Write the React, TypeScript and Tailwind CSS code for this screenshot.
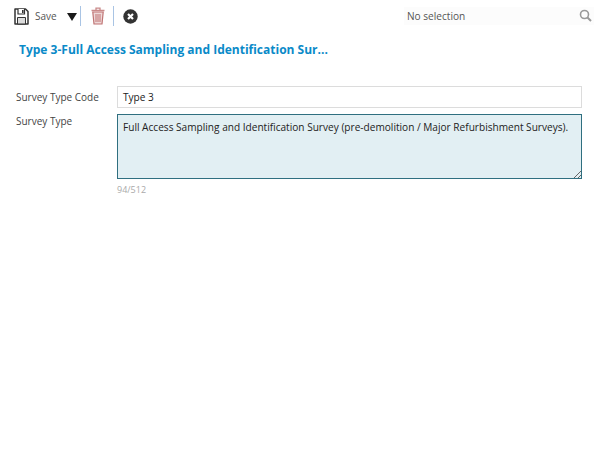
import React from "react";

export default function App() {
  return (
    <div className="w-[600px] h-[454px] bg-white overflow-hidden font-['Open_Sans',sans-serif] text-[10px] text-[#333]">
      <div className="flex items-center h-[32px] pl-[14px]">
        <svg width="15" height="17" viewBox="0 0 15 17" className="shrink-0">
          <path d="M1 1h10.5L14 3.5V16H1z" fill="#fff" stroke="#333" strokeWidth="1.5" strokeLinejoin="round" />
          <path d="M4 1v5h6.5V1" fill="#fff" stroke="#333" strokeWidth="1.2" />
          <path d="M8 2h1.6v3H8z" fill="#333" />
          <path d="M3.5 9.5h8V16h-8z" fill="#dcdcdc" stroke="#333" strokeWidth="1" />
        </svg>
        <span className="ml-[6px] text-[#555] w-[32px]">Save</span>
        <svg width="10" height="8" viewBox="0 0 10 8" className="mt-[2px]">
          <path d="M0 0h10L5 8z" fill="#1a1a1a" />
        </svg>
        <div className="w-px h-[20px] bg-[#a9c4e4] ml-[3px]" />
        <svg width="14" height="18" viewBox="0 0 14 18" className="ml-[10px]">
          <path d="M0.5 3.5h13M5 3.5V1.2h4v2.3" fill="none" stroke="#c98a8a" strokeWidth="1.3" />
          <path d="M1.8 5h10.4L11 17H3z" fill="#eed9d9" stroke="#bf7373" strokeWidth="1.2" />
          <path d="M5 7v8M7 7v8M9 7v8" stroke="#bf7373" strokeWidth="1" />
        </svg>
        <div className="w-px h-[20px] bg-[#a9c4e4] ml-[8px]" />
        <svg width="15" height="15" viewBox="0 0 15 15" className="ml-[9px]">
          <circle cx="7.5" cy="7.5" r="7.2" fill="#333" />
          <path d="M5 5l5 5M10 5l-5 5" stroke="#fff" strokeWidth="2.2" />
        </svg>
        <div className="ml-[266px] w-[190px] h-[18px] bg-[#fcfcfc] flex items-center justify-between pl-[3px] pr-[2px]">
          <span className="text-[#555] text-[10.1px] mt-[1px]">No selection</span>
          <svg width="13" height="13" viewBox="0 0 13 13" className="-mt-[1px]">
            <circle cx="5.5" cy="5.5" r="4" fill="none" stroke="#999" strokeWidth="1.6" />
            <path d="M8.5 8.5L12 12" stroke="#999" strokeWidth="2" />
          </svg>
        </div>
      </div>
      <h1 className="mt-[9px] ml-[19px] text-[12px] leading-[17px] font-bold text-[#0a8ac8]">
        Type 3-Full Access Sampling and Identification Sur...
      </h1>
      <div className="mt-[28px] pl-[16px] pr-[18px] flex flex-col gap-[6px]">
        <div className="flex items-center">
          <label className="w-[101px] shrink-0 text-[#444]">Survey Type Code</label>
          <div className="flex-1 h-[22px] border border-[#dcdcdc] bg-white flex items-center pl-[5px] pt-[1px] text-[#222] text-[10.1px]">Type 3</div>
        </div>
        <div className="flex items-start">
          <label className="w-[101px] shrink-0 text-[#444] leading-[14px]">Survey Type</label>
          <div className="flex-1">
            <div className="relative h-[65px] border border-[#2f6f80] bg-[#e2eff3] pl-[5px] pt-[5px] leading-[14px] text-[#222] text-[10.1px]">
              Full Access Sampling and Identification Survey (pre-demolition / Major Refurbishment Surveys).
              <svg width="8" height="8" viewBox="0 0 8 8" className="absolute right-0 bottom-0">
                <path d="M1 8L8 1M5 8L8 5" stroke="#666" strokeWidth="1" />
              </svg>
            </div>
            <div className="mt-[4px] text-[9px] leading-[13px] text-[#aaa]">94/512</div>
          </div>
        </div>
      </div>
    </div>
  );
}
